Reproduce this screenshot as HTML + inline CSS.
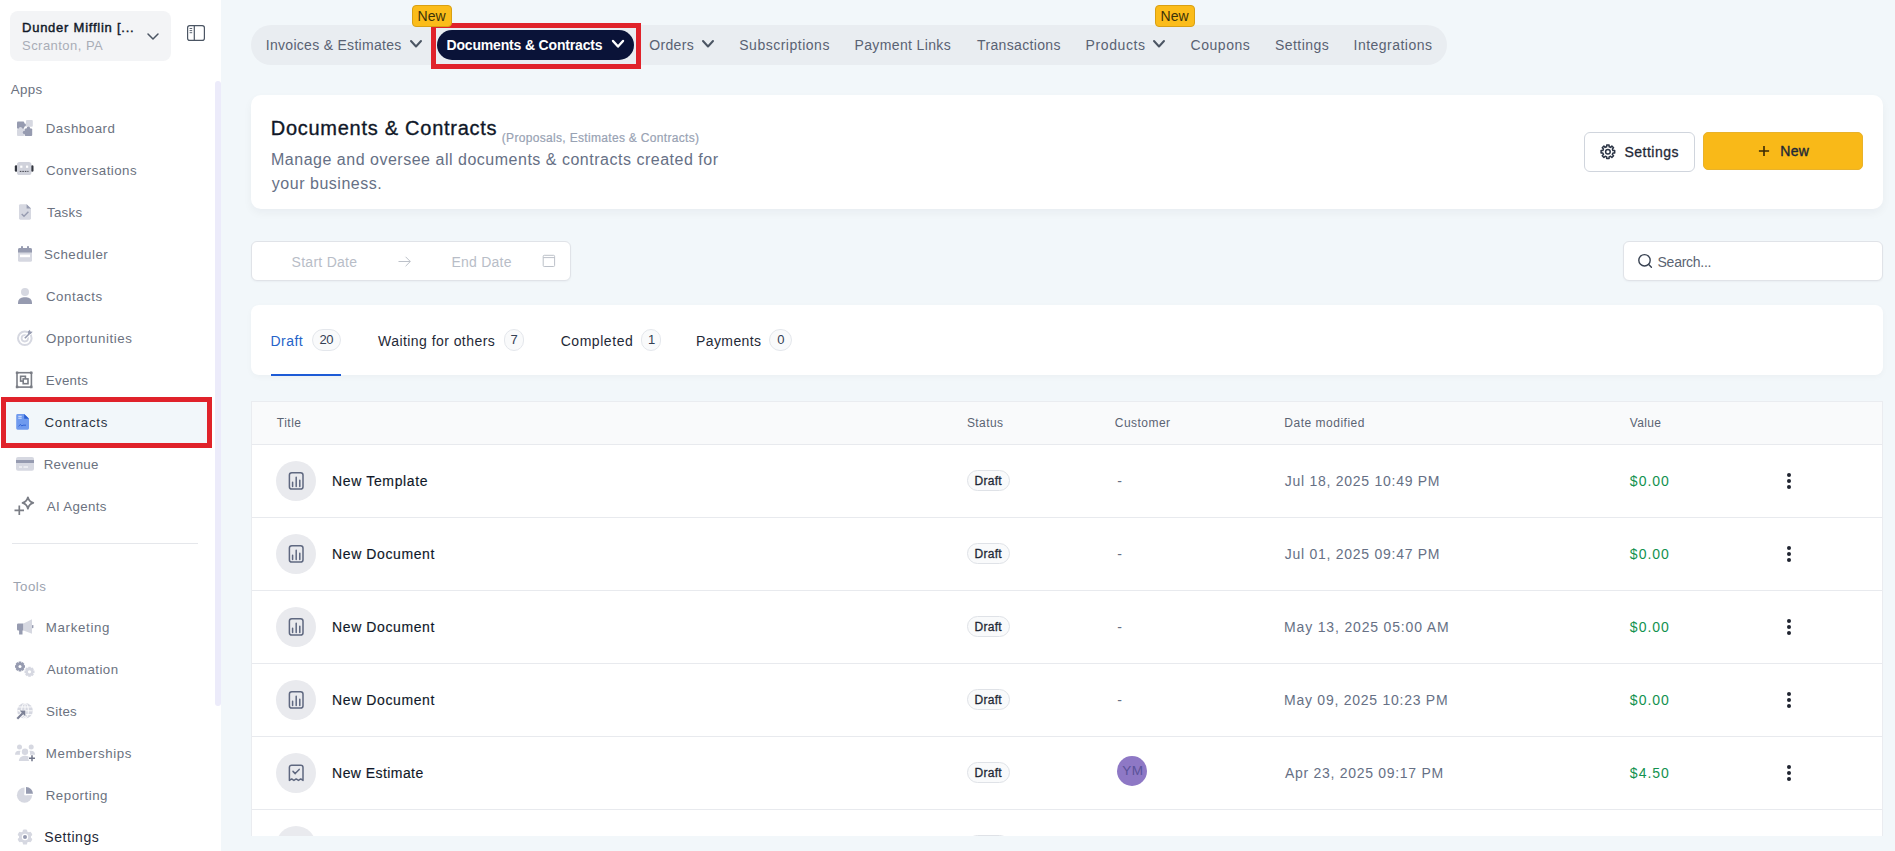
<!DOCTYPE html>
<html lang="en"><head><meta charset="utf-8"><title>Documents &amp; Contracts</title>
<style>

*{box-sizing:border-box;margin:0;padding:0}
html,body{width:1895px;height:851px;overflow:hidden;background:#f2f7fa;font-family:"Liberation Sans",Arial,sans-serif;}
body{position:relative}
.t{position:absolute;white-space:nowrap;display:block}
.a{position:absolute;display:block}
#sidebar{left:0;top:0;width:221px;height:851px;background:#fff}
#acct{left:10px;top:11px;width:161px;height:50px;background:#f3f4f6;border-radius:8px}
#sbar{left:215px;top:81px;width:6px;height:625px;background:#ecebfa;border-radius:3px}
#selbox{left:1px;top:397px;width:211px;height:51px;border:5px solid #e0222a;background:#f2f7fa}
#divider{left:12px;top:543px;width:186px;height:1px;background:#e5e7eb}
#navbar{left:251px;top:25px;width:1196px;height:40px;background:#e9edf1;border-radius:20px}
#navred{left:431px;top:23px;width:210px;height:46px;border:5px solid #e0222a;background:#e9edf1}
#navact{left:437px;top:30px;width:197px;height:30px;background:#0a1338;border-radius:15px}
.newb{width:40px;height:22px;background:#fbbc1a;border:1px solid #d9a013;border-radius:4px}
#hcard{left:251px;top:95px;width:1632px;height:114px;background:#fff;border-radius:10px;box-shadow:0 4px 10px rgba(16,24,40,.045)}
#bset{left:1584px;top:132px;width:111px;height:40px;background:#fff;border:1px solid #d0d5dd;border-radius:6px}
#bnew{left:1703px;top:132px;width:160px;height:38px;background:#f9b918;border:1px solid #e9b22a;border-radius:5px}
#dbox{left:251px;top:241px;width:320px;height:40px;background:#fff;border:1px solid #e0e3e8;border-radius:6px;box-shadow:0 1px 2px rgba(16,24,40,.04)}
#sbox{left:1623px;top:241px;width:260px;height:40px;background:#fff;border:1px solid #e0e3e8;border-radius:6px;box-shadow:0 1px 2px rgba(16,24,40,.04)}
#tcard{left:251px;top:305px;width:1632px;height:70px;background:#fff;border-radius:8px;box-shadow:0 2px 6px rgba(16,24,40,.03)}
#tline{left:271px;top:374px;width:70px;height:2px;background:#1d5bd6}
.cb{height:22px;border:1px solid #e4e7ec;border-radius:11px;background:#f9fafb}
#table{left:251px;top:401px;width:1632px;height:435px;background:#fff;border:1px solid #eaecf0;border-bottom:0;overflow:hidden}
#thead{left:0;top:0;width:1632px;height:43px;background:#f9fafb;border-bottom:1px solid #e8eaee}
.rl{left:0;width:1632px;height:1px;background:#e8eaee}
.ic{width:40px;height:40px;border-radius:20px;background:#e9eaee}
.db{width:43px;height:21px;border:1px solid #dfe2e7;border-radius:11px;background:#f9fafb}
.dot{width:3.5px;height:3.5px;border-radius:2px;background:#1f2430}
#ym{left:1117px;top:756px;width:30px;height:30px;border-radius:15px;background:#8e78c5}
</style></head><body>
<div class="a" id="sidebar"></div>
<div class="a" id="acct"></div>
<div class="a" id="sbar"></div>
<div class="a" id="selbox"></div>
<div class="a" id="divider"></div>
<div class="a" id="navbar"></div>
<div class="a" id="navred"></div>
<div class="a" id="navact"></div>
<div class="a newb" style="left:412px;top:5px"></div>
<div class="a newb" style="left:1155px;top:5px"></div>
<div class="a" id="hcard"></div>
<div class="a" id="bset"></div>
<div class="a" id="bnew"></div>
<div class="a" id="dbox"></div>
<div class="a" id="sbox"></div>
<div class="a" id="tcard"></div>
<div class="a" id="tline"></div>
<div class="a cb" style="left:312px;top:329px;width:29px"></div>
<div class="a cb" style="left:503.5px;top:329px;width:20.5px"></div>
<div class="a cb" style="left:641px;top:329px;width:19.5px"></div>
<div class="a cb" style="left:769px;top:329px;width:23px"></div>
<div class="a" id="table"><div class="a" id="thead"></div>
<div class="a rl" style="top:115px"></div>
<div class="a rl" style="top:188px"></div>
<div class="a rl" style="top:261px"></div>
<div class="a rl" style="top:334px"></div>
<div class="a rl" style="top:407px"></div>
<div class="a ic" style="left:24px;top:59px"></div>
<div class="a db" style="left:715px;top:68.25px"></div>
<div class="a ic" style="left:24px;top:132px"></div>
<div class="a db" style="left:715px;top:141.25px"></div>
<div class="a ic" style="left:24px;top:205px"></div>
<div class="a db" style="left:715px;top:214.25px"></div>
<div class="a ic" style="left:24px;top:278px"></div>
<div class="a db" style="left:715px;top:287.25px"></div>
<div class="a ic" style="left:24px;top:351px"></div>
<div class="a db" style="left:715px;top:360.25px"></div>
<div class="a ic" style="left:24px;top:424px"></div>
<div class="a db" style="left:715px;top:433.25px"></div>
</div>
<div class="a dot" style="left:1787.25px;top:473.35px"></div>
<div class="a dot" style="left:1787.25px;top:479.25px"></div>
<div class="a dot" style="left:1787.25px;top:485.15px"></div>
<div class="a dot" style="left:1787.25px;top:546.35px"></div>
<div class="a dot" style="left:1787.25px;top:552.25px"></div>
<div class="a dot" style="left:1787.25px;top:558.15px"></div>
<div class="a dot" style="left:1787.25px;top:619.35px"></div>
<div class="a dot" style="left:1787.25px;top:625.25px"></div>
<div class="a dot" style="left:1787.25px;top:631.15px"></div>
<div class="a dot" style="left:1787.25px;top:692.35px"></div>
<div class="a dot" style="left:1787.25px;top:698.25px"></div>
<div class="a dot" style="left:1787.25px;top:704.15px"></div>
<div class="a dot" style="left:1787.25px;top:765.35px"></div>
<div class="a dot" style="left:1787.25px;top:771.25px"></div>
<div class="a dot" style="left:1787.25px;top:777.15px"></div>
<div class="a" id="ym"></div>
<svg class="a" style="left:408.5px;top:39.35px" width="14" height="9.5" viewBox="0 0 14 9.5" ><path d="M2 2 L7 7.5 L12 2" fill="none" stroke="#4b5563" stroke-width="2" stroke-linecap="round" stroke-linejoin="round"/></svg>
<svg class="a" style="left:610.5px;top:39.35px" width="14" height="9.5" viewBox="0 0 14 9.5" ><path d="M2 2 L7 7.5 L12 2" fill="none" stroke="#ffffff" stroke-width="2.4" stroke-linecap="round" stroke-linejoin="round"/></svg>
<svg class="a" style="left:701px;top:39.35px" width="14" height="9.5" viewBox="0 0 14 9.5" ><path d="M2 2 L7 7.5 L12 2" fill="none" stroke="#4b5563" stroke-width="2" stroke-linecap="round" stroke-linejoin="round"/></svg>
<svg class="a" style="left:1152px;top:39.35px" width="14" height="9.5" viewBox="0 0 14 9.5" ><path d="M2 2 L7 7.5 L12 2" fill="none" stroke="#4b5563" stroke-width="2" stroke-linecap="round" stroke-linejoin="round"/></svg>
<svg class="a" style="left:145.5px;top:31.5px" width="14" height="9" viewBox="0 0 14 9" ><path d="M2 2 L7 7 L12 2" fill="none" stroke="#4b5563" stroke-width="1.5" stroke-linecap="round" stroke-linejoin="round"/></svg>
<svg class="a" style="left:0;top:0" width="1895" height="851" viewBox="0 0 1895 851">
<g fill="none" stroke="#4b5563" stroke-width="1.2"><rect x="187.6" y="25.6" width="16.8" height="14.8" rx="2.2"/><path d="M194.3 25.6V40.4"/><path d="M189.6 28.5h2.6M189.6 30.6h2.6M189.6 32.7h2.6" stroke-width="0.9"/></g>
<g><rect x="17" y="121.5" width="7.2" height="7.2" rx="1" fill="#969bb0"/><circle cx="24.3" cy="125" r="1.7" fill="#969bb0"/><rect x="26" y="120" width="6.8" height="6.8" rx="1" fill="#d6d8e1"/><rect x="17" y="129" width="7.2" height="7" rx="1" fill="#d6d8e1"/><circle cx="20.5" cy="128.6" r="1.7" fill="#d6d8e1"/><rect x="24.6" y="128.6" width="7.6" height="7.4" rx="1" fill="#969bb0"/><circle cx="28.4" cy="128.2" r="1.7" fill="#969bb0"/><circle cx="24.4" cy="132.4" r="1.6" fill="#969bb0"/></g>
<g><rect x="14.8" y="165.3" width="2.6" height="6.4" rx="1.3" fill="#33363f"/><rect x="30.9" y="165.3" width="2.6" height="6.4" rx="1.3" fill="#33363f"/><rect x="17" y="162" width="14.4" height="13" rx="2.6" fill="#d0d2db"/><rect x="20.2" y="165.6" width="2.2" height="2.2" fill="#fff"/><rect x="26" y="165.6" width="2.2" height="2.2" fill="#fff"/><path d="M19.8 171.4h1.6M22.3 171.4h1.6M24.8 171.4h1.6M27.3 171.4h1.2" stroke="#33363f" stroke-width="0.9"/></g>
<g><path d="M20.4 204.2h6.2l4.4 4.4v9.7a1.4 1.4 0 0 1-1.4 1.4h-9.2a1.4 1.4 0 0 1-1.4-1.4v-12.7a1.4 1.4 0 0 1 1.4-1.4z" fill="#d6d8e1"/><path d="M26.6 204.2l4.4 4.4h-4.4z" fill="#969bb0"/><path d="M21.700 214l2.300 2.300 4.400-4.500" fill="none" stroke="#969bb0" stroke-width="1.400"/></g>
<g><rect x="18" y="248" width="14" height="13.8" rx="1.6" fill="#d6d8e1"/><path d="M18 249.6a1.6 1.6 0 0 1 1.6-1.6h10.8a1.6 1.6 0 0 1 1.6 1.6v3h-14z" fill="#969bb0"/><rect x="21" y="246.2" width="2" height="3" fill="#969bb0"/><rect x="27" y="246.2" width="2" height="3" fill="#969bb0"/><rect x="20" y="254.6" width="10" height="2.6" fill="#fff"/></g>
<g><circle cx="25" cy="292" r="4" fill="#d6d8e1"/><path d="M18 304v-1.2a5.6 5.6 0 0 1 5.6-5.6h2.8a5.6 5.6 0 0 1 5.6 5.6v1.2z" fill="#969bb0"/></g>
<g fill="none" stroke="#d6d8e1"><circle cx="24.8" cy="338.3" r="6.8" stroke-width="2"/><circle cx="24.8" cy="338.3" r="3.2" stroke-width="1.8"/></g><g><path d="M24.8 338.3l5.4-5.4" stroke="#fff" stroke-width="3.2"/><path d="M24.8 338.3l5-5" stroke="#969bb0" stroke-width="1.6"/><path d="M28 331.600l1.800-1.900 .6 1.700 2.300 .4-2 2.100-2.500 .1z" fill="#969bb0"/></g>
<g fill="none" stroke="#7a7d85" stroke-width="1.6"><rect x="17" y="372.7" width="14.4" height="14.4"/><rect x="20.6" y="376.3" width="4.8" height="4.8"/><rect x="23.2" y="378.9" width="4.8" height="4.8" fill="#fff"/></g><g fill="#7a7d85"><rect x="15.8" y="371.5" width="2.6" height="2.6" rx=".5"/><rect x="29.9" y="371.5" width="2.6" height="2.6" rx=".5"/><rect x="15.8" y="385.6" width="2.6" height="2.6" rx=".5"/><rect x="29.9" y="385.6" width="2.6" height="2.6" rx=".5"/></g>
<g><path d="M17.6 414h6.6l4.8 4.8v9.5a1.4 1.4 0 0 1-1.4 1.4h-10a1.4 1.4 0 0 1-1.4-1.4v-12.9a1.4 1.4 0 0 1 1.4-1.4z" fill="#6f9aee"/><path d="M24.2 414l4.8 4.800h-4.800z" fill="#2a5fd2"/><path d="M18.300 416.300h3.400M18.300 418.200h3.400" stroke="#e8f0ff" stroke-width="0.9"/><path d="M18.600 426.400l1.800-2 1.400 1.600 1.200-.8h3" fill="none" stroke="#2a5fd2" stroke-width="0.9"/></g>
<g><rect x="16" y="457" width="18" height="13.800" rx="2" fill="#d6d8e1"/><rect x="16" y="460" width="18" height="3" fill="#969bb0"/><path d="M19 467h3M23.500 467h4.500" stroke="#fff" stroke-width="1"/></g>
<g fill="none" stroke="#7a7d85" stroke-width="1.700"><path d="M14.500 510.400h9.500M19.300 505.600v9.500"/><path d="M27.900 497.300c.8 3.300 2.200 4.800 5.400 5.600c-3.200 .8-4.600 2.400-5.400 5.800c-.8-3.400-2.200-5-5.400-5.800c3.200-.8 4.600-2.300 5.400-5.600z" stroke-linejoin="round"/></g>
<g><path d="M18.200 623.500h5.300v7h-1v4h-3.400v-4h-.9a1.200 1.200 0 0 1-1.200-1.200v-4.600a1.200 1.200 0 0 1 1.200-1.200z" fill="#969bb0"/><path d="M23.500 623.500l8.500-4.200v14.400l-8.500-3.200z" fill="#d6d8e1"/><rect x="32" y="625" width="1.400" height="3.200" rx=".6" fill="#969bb0"/></g>
<g fill="#969bb0"><circle cx="20" cy="666.5" r="4"/><rect x="18.7" y="661.5" width="2.6" height="10" transform="rotate(0 20 666.5)"/><rect x="18.7" y="661.5" width="2.6" height="10" transform="rotate(45 20 666.5)"/><rect x="18.7" y="661.5" width="2.6" height="10" transform="rotate(90 20 666.5)"/><rect x="18.7" y="661.5" width="2.6" height="10" transform="rotate(135 20 666.5)"/></g><circle cx="20" cy="666.5" r="1.5" fill="#fff"/>
<g fill="#d6d8e1"><circle cx="29.5" cy="671.8" r="4"/><rect x="28.2" y="666.8" width="2.6" height="10" transform="rotate(0 29.5 671.8)"/><rect x="28.2" y="666.8" width="2.6" height="10" transform="rotate(45 29.5 671.8)"/><rect x="28.2" y="666.8" width="2.6" height="10" transform="rotate(90 29.5 671.8)"/><rect x="28.2" y="666.8" width="2.6" height="10" transform="rotate(135 29.5 671.8)"/></g><circle cx="29.5" cy="671.8" r="1.6" fill="#fff"/>
<g><circle cx="25" cy="710.800" r="7.800" fill="#d6d8e1"/><g fill="none" stroke="#fff" stroke-width="0.9"><ellipse cx="25" cy="710.800" rx="3.400" ry="7.800"/><path d="M25 703v15.600M17.200 710.800h15.600M18.200 707h13.600M18.200 714.600h13.600"/></g><path d="M16.600 719.400l6-6" stroke="#fff" stroke-width="3.400" fill="none"/><path d="M19.600 710.600h5.800v5.800z" stroke="#fff" stroke-width="1.400" fill="#fff"/><path d="M17.300 718.700l5.400-5.400" stroke="#7c8196" stroke-width="2.200" fill="none"/><path d="M19.600 710.600h5.800v5.800z" fill="#7c8196"/></g>
<g fill="#d6d8e1"><circle cx="19.500" cy="747" r="2.500"/><circle cx="31.200" cy="747" r="2.500"/><circle cx="25" cy="751.800" r="3.200"/><path d="M15 754.800a4 4 0 0 1 4-4h1.600a5 5 0 0 0-.6 4zM35 754.800a4 4 0 0 0-4-4h-1.600a5 5 0 0 1 .6 4z"/><path d="M18.800 761a5.400 5.400 0 0 1 5.400-5.200h1.600a5.400 5.400 0 0 1 5.400 5.200z"/></g><circle cx="32" cy="758.300" r="3.600" fill="#fff"/><path d="M29 758.300h6M32 755.300v6" stroke="#6f7488" stroke-width="1.500"/>
<g><circle cx="24.500" cy="795.200" r="7.600" fill="#d6d8e1"/><path d="M24.500 795.200V786h2.500v9.200z" fill="#fff"/><path d="M24.500 795.200h9.500v-2.500h-9.500z" fill="#fff"/><path d="M26 793.800v-6.800a6.900 6.900 0 0 1 7 6.800z" fill="#969bb0"/></g>
<g fill="#d6d8e1"><circle cx="25" cy="837" r="6.08"/><rect x="22.872" y="829.4" width="4.256" height="15.2" rx="1.200" transform="rotate(0 25 837)"/><rect x="22.872" y="829.4" width="4.256" height="15.2" rx="1.200" transform="rotate(60 25 837)"/><rect x="22.872" y="829.4" width="4.256" height="15.2" rx="1.200" transform="rotate(120 25 837)"/></g>
<circle cx="25" cy="837" r="3.200" fill="#fff"/><circle cx="25" cy="837" r="2" fill="#969bb0"/>
<g fill="none" stroke="#2b3445" stroke-width="1.500" stroke-linejoin="round"><path d="M1606.71 145.00L1609.09 145.00L1609.11 146.74L1610.62 147.37L1611.87 146.15L1613.55 147.83L1612.33 149.08L1612.96 150.59L1614.70 150.61L1614.70 152.99L1612.96 153.01L1612.33 154.52L1613.55 155.77L1611.87 157.45L1610.62 156.23L1609.11 156.86L1609.09 158.60L1606.71 158.60L1606.69 156.86L1605.18 156.23L1603.93 157.45L1602.25 155.77L1603.47 154.52L1602.84 153.01L1601.10 152.99L1601.10 150.61L1602.84 150.59L1603.47 149.08L1602.25 147.83L1603.93 146.15L1605.18 147.37L1606.69 146.74Z"/><circle cx="1607.900" cy="151.800" r="2.300"/></g>
<path d="M1758.900 151h10.200M1764 145.900v10.200" stroke="#3a2a05" stroke-width="1.600" fill="none"/>
<g fill="none" stroke="#bcc1c9" stroke-width="1"><path d="M398.500 261.500h11.700M405.600 256.800l4.700 4.700-4.700 4.700"/><rect x="543.200" y="255.300" width="11.400" height="11.200" rx="1"/><path d="M543.200 257.600h11.400"/></g>
<g fill="none" stroke="#374151" stroke-width="1.400" stroke-linecap="round"><circle cx="1644.500" cy="260.300" r="5.700"/><path d="M1648.700 264.500l2.700 2.700"/></g>
<g fill="none" stroke="#5f6880" stroke-width="1.500" stroke-linecap="round"><rect x="289.400" y="472.7" width="13.600" height="16.400" rx="2.400"/><path d="M292.600 482.3v4.300M296.200 477.3v9.300M299.800 480.3v6.300"/></g>
<g fill="none" stroke="#5f6880" stroke-width="1.500" stroke-linecap="round"><rect x="289.400" y="545.7" width="13.600" height="16.400" rx="2.400"/><path d="M292.600 555.3v4.300M296.200 550.3v9.300M299.800 553.3v6.300"/></g>
<g fill="none" stroke="#5f6880" stroke-width="1.500" stroke-linecap="round"><rect x="289.400" y="618.7" width="13.600" height="16.400" rx="2.400"/><path d="M292.600 628.3v4.300M296.200 623.3v9.300M299.800 626.3v6.300"/></g>
<g fill="none" stroke="#5f6880" stroke-width="1.500" stroke-linecap="round"><rect x="289.400" y="691.7" width="13.600" height="16.400" rx="2.400"/><path d="M292.600 701.3v4.300M296.200 696.3v9.300M299.800 699.3v6.300"/></g>
<g fill="none" stroke="#5f6880" stroke-width="1.500" stroke-linecap="round" stroke-linejoin="round"><path d="M289.400 780.4v-13a2.200 2.200 0 0 1 2.200-2.200h9.200a2.200 2.200 0 0 1 2.200 2.200v13l-2.270-1.500-2.270 1.500-2.270-1.500-2.270 1.500-2.270-1.500z"/><path d="M293 771.4l2.200 2.200 4-4.200"/></g>
</svg>
<span class="t" id="t0" style="left:22.00px;top:18.00px;font-size:13px;line-height:19px;font-weight:400;color:#101828;letter-spacing:0.756px;-webkit-text-stroke:0.42px #101828;">Dunder Mifflin [...</span>
<span class="t" id="t1" style="left:22.00px;top:36.00px;font-size:13px;line-height:19px;font-weight:400;color:#a9adb6;letter-spacing:0.464px;">Scranton, PA</span>
<span class="t" id="t2" style="left:10.75px;top:79.65px;font-size:13.3px;line-height:19.3px;font-weight:400;color:#6b7280;letter-spacing:0.367px;">Apps</span>
<span class="t" id="t3" style="left:45.75px;top:118.55px;font-size:13.3px;line-height:19.3px;font-weight:400;color:#6b7280;letter-spacing:0.512px;">Dashboard</span>
<span class="t" id="t4" style="left:46.00px;top:160.55px;font-size:13.3px;line-height:19.3px;font-weight:400;color:#6b7280;letter-spacing:0.467px;">Conversations</span>
<span class="t" id="t5" style="left:47.00px;top:202.55px;font-size:13.3px;line-height:19.3px;font-weight:400;color:#6b7280;letter-spacing:0.275px;">Tasks</span>
<span class="t" id="t6" style="left:44.00px;top:244.55px;font-size:13.3px;line-height:19.3px;font-weight:400;color:#6b7280;letter-spacing:0.481px;">Scheduler</span>
<span class="t" id="t7" style="left:46.00px;top:286.55px;font-size:13.3px;line-height:19.3px;font-weight:400;color:#6b7280;letter-spacing:0.514px;">Contacts</span>
<span class="t" id="t8" style="left:46.00px;top:328.55px;font-size:13.3px;line-height:19.3px;font-weight:400;color:#6b7280;letter-spacing:0.558px;">Opportunities</span>
<span class="t" id="t9" style="left:45.75px;top:370.55px;font-size:13.3px;line-height:19.3px;font-weight:400;color:#6b7280;letter-spacing:0.320px;">Events</span>
<span class="t" id="t10" style="left:43.75px;top:454.55px;font-size:13.3px;line-height:19.3px;font-weight:400;color:#6b7280;letter-spacing:0.225px;">Revenue</span>
<span class="t" id="t11" style="left:46.75px;top:496.55px;font-size:13.3px;line-height:19.3px;font-weight:400;color:#6b7280;letter-spacing:0.344px;">AI Agents</span>
<span class="t" id="t12" style="left:45.75px;top:617.55px;font-size:13.3px;line-height:19.3px;font-weight:400;color:#6b7280;letter-spacing:0.669px;">Marketing</span>
<span class="t" id="t13" style="left:46.75px;top:659.55px;font-size:13.3px;line-height:19.3px;font-weight:400;color:#6b7280;letter-spacing:0.450px;">Automation</span>
<span class="t" id="t14" style="left:46.00px;top:701.55px;font-size:13.3px;line-height:19.3px;font-weight:400;color:#6b7280;letter-spacing:0.300px;">Sites</span>
<span class="t" id="t15" style="left:45.75px;top:743.55px;font-size:13.3px;line-height:19.3px;font-weight:400;color:#6b7280;letter-spacing:0.590px;">Memberships</span>
<span class="t" id="t16" style="left:45.75px;top:785.55px;font-size:13.3px;line-height:19.3px;font-weight:400;color:#6b7280;letter-spacing:0.512px;">Reporting</span>
<span class="t" id="t17" style="left:44.50px;top:412.55px;font-size:13.3px;line-height:19.3px;font-weight:400;color:#2b3443;letter-spacing:0.750px;">Contracts</span>
<span class="t" id="t18" style="left:13.00px;top:577.05px;font-size:13.3px;line-height:19.3px;font-weight:400;color:#9ca3af;letter-spacing:0.450px;">Tools</span>
<span class="t" id="t19" style="left:44.35px;top:827.20px;font-size:14px;line-height:20px;font-weight:400;color:#1f2937;letter-spacing:0.543px;">Settings</span>
<span class="t" id="t20" style="left:265.75px;top:35.00px;font-size:14px;line-height:20px;font-weight:400;color:#596273;letter-spacing:0.295px;">Invoices &amp; Estimates</span>
<span class="t" id="t21" style="left:446.50px;top:35.00px;font-size:14px;line-height:20px;font-weight:700;color:#ffffff;letter-spacing:-0.170px;">Documents &amp; Contracts</span>
<span class="t" id="t22" style="left:649.25px;top:35.00px;font-size:14px;line-height:20px;font-weight:400;color:#596273;letter-spacing:0.320px;">Orders</span>
<span class="t" id="t23" style="left:739.25px;top:35.00px;font-size:14px;line-height:20px;font-weight:400;color:#596273;letter-spacing:0.508px;">Subscriptions</span>
<span class="t" id="t24" style="left:854.50px;top:35.00px;font-size:14px;line-height:20px;font-weight:400;color:#596273;letter-spacing:0.363px;">Payment Links</span>
<span class="t" id="t25" style="left:977.00px;top:35.00px;font-size:14px;line-height:20px;font-weight:400;color:#596273;letter-spacing:0.350px;">Transactions</span>
<span class="t" id="t26" style="left:1085.50px;top:35.00px;font-size:14px;line-height:20px;font-weight:400;color:#596273;letter-spacing:0.621px;">Products</span>
<span class="t" id="t27" style="left:1190.50px;top:35.00px;font-size:14px;line-height:20px;font-weight:400;color:#596273;letter-spacing:0.550px;">Coupons</span>
<span class="t" id="t28" style="left:1275.00px;top:35.00px;font-size:14px;line-height:20px;font-weight:400;color:#596273;letter-spacing:0.443px;">Settings</span>
<span class="t" id="t29" style="left:1353.50px;top:35.00px;font-size:14px;line-height:20px;font-weight:400;color:#596273;letter-spacing:0.486px;">Integrations</span>
<span class="t" id="t30" style="left:417.39px;top:6.00px;font-size:14px;line-height:20px;font-weight:400;color:#3b3209;letter-spacing:0.175px;">New</span>
<span class="t" id="t31" style="left:1160.39px;top:6.00px;font-size:14px;line-height:20px;font-weight:400;color:#3b3209;letter-spacing:0.175px;">New</span>
<span class="t" id="t32" style="left:270.75px;top:115.00px;font-size:20px;line-height:26px;font-weight:400;color:#101828;letter-spacing:0.730px;-webkit-text-stroke:0.35px #101828;">Documents &amp; Contracts</span>
<span class="t" id="t33" style="left:501.75px;top:129.00px;font-size:12px;line-height:18px;font-weight:400;color:#98a2b3;letter-spacing:0.321px;-webkit-text-stroke:0.2px #98a2b3;">(Proposals, Estimates &amp; Contracts)</span>
<span class="t" id="t34" style="left:271.00px;top:148.50px;font-size:16px;line-height:22px;font-weight:400;color:#667085;letter-spacing:0.511px;">Manage and oversee all documents &amp; contracts created for</span>
<span class="t" id="t35" style="left:271.85px;top:172.50px;font-size:16px;line-height:22px;font-weight:400;color:#667085;letter-spacing:0.519px;">your business.</span>
<span class="t" id="t36" style="left:1624.54px;top:142.00px;font-size:14px;line-height:20px;font-weight:400;color:#1f2937;letter-spacing:0.471px;-webkit-text-stroke:0.3px #1f2937;">Settings</span>
<span class="t" id="t37" style="left:1780.25px;top:141.00px;font-size:14px;line-height:20px;font-weight:400;color:#1f2937;letter-spacing:0.350px;-webkit-text-stroke:0.4px #1f2937;">New</span>
<span class="t" id="t38" style="left:291.54px;top:252.00px;font-size:14px;line-height:20px;font-weight:400;color:#b8bdc7;letter-spacing:0.278px;">Start Date</span>
<span class="t" id="t39" style="left:451.50px;top:252.00px;font-size:14px;line-height:20px;font-weight:400;color:#b8bdc7;letter-spacing:0.236px;">End Date</span>
<span class="t" id="t40" style="left:1657.54px;top:251.50px;font-size:14px;line-height:20px;font-weight:400;color:#5b6472;letter-spacing:-0.256px;">Search...</span>
<span class="t" id="t41" style="left:270.50px;top:331.00px;font-size:14px;line-height:20px;font-weight:400;color:#2563c9;letter-spacing:0.463px;">Draft</span>
<span class="t" id="t42" style="left:378.04px;top:331.00px;font-size:14px;line-height:20px;font-weight:400;color:#1f2937;letter-spacing:0.444px;">Waiting for others</span>
<span class="t" id="t43" style="left:560.64px;top:331.00px;font-size:14px;line-height:20px;font-weight:400;color:#1f2937;letter-spacing:0.556px;">Completed</span>
<span class="t" id="t44" style="left:696.00px;top:331.00px;font-size:14px;line-height:20px;font-weight:400;color:#1f2937;letter-spacing:0.407px;">Payments</span>
<span class="t" id="t45" style="left:319.50px;top:330.00px;font-size:13px;line-height:19px;font-weight:400;color:#344054;letter-spacing:-0.400px;">20</span>
<span class="t" id="t46" style="left:510.50px;top:330.00px;font-size:13px;line-height:19px;font-weight:400;color:#344054;letter-spacing:-0.400px;">7</span>
<span class="t" id="t47" style="left:648.10px;top:330.00px;font-size:13px;line-height:19px;font-weight:400;color:#344054;letter-spacing:-1.700px;">1</span>
<span class="t" id="t48" style="left:777.25px;top:330.00px;font-size:13px;line-height:19px;font-weight:400;color:#344054;letter-spacing:0.100px;">0</span>
<span class="t" id="t49" style="left:276.85px;top:414.00px;font-size:12px;line-height:18px;font-weight:400;color:#5b6473;letter-spacing:0.487px;">Title</span>
<span class="t" id="t50" style="left:966.89px;top:414.00px;font-size:12px;line-height:18px;font-weight:400;color:#5b6473;letter-spacing:0.430px;">Status</span>
<span class="t" id="t51" style="left:1114.85px;top:414.00px;font-size:12px;line-height:18px;font-weight:400;color:#5b6473;letter-spacing:0.457px;">Customer</span>
<span class="t" id="t52" style="left:1284.29px;top:414.00px;font-size:12px;line-height:18px;font-weight:400;color:#5b6473;letter-spacing:0.512px;">Date modified</span>
<span class="t" id="t53" style="left:1629.85px;top:414.00px;font-size:12px;line-height:18px;font-weight:400;color:#5b6473;letter-spacing:0.337px;">Value</span>
<span class="t" id="t54" style="left:332.10px;top:470.70px;font-size:14px;line-height:20px;font-weight:400;color:#101828;letter-spacing:0.641px;-webkit-text-stroke:0.15px #101828;">New Template</span>
<span class="t" id="t55" style="left:974.50px;top:472.00px;font-size:12px;line-height:18px;font-weight:400;color:#1f2937;letter-spacing:0.275px;-webkit-text-stroke:0.3px #1f2937;">Draft</span>
<span class="t" id="t56" style="left:1117.25px;top:471.00px;font-size:14px;line-height:20px;font-weight:400;color:#667085;">-</span>
<span class="t" id="t57" style="left:1284.79px;top:470.60px;font-size:14px;line-height:20px;font-weight:400;color:#667085;letter-spacing:0.732px;">Jul 18, 2025 10:49 PM</span>
<span class="t" id="t58" style="left:1629.85px;top:470.60px;font-size:14px;line-height:20px;font-weight:400;color:#12924f;letter-spacing:1.000px;">$0.00</span>
<span class="t" id="t59" style="left:332.10px;top:543.70px;font-size:14px;line-height:20px;font-weight:400;color:#101828;letter-spacing:0.591px;-webkit-text-stroke:0.15px #101828;">New Document</span>
<span class="t" id="t60" style="left:974.50px;top:545.00px;font-size:12px;line-height:18px;font-weight:400;color:#1f2937;letter-spacing:0.275px;-webkit-text-stroke:0.3px #1f2937;">Draft</span>
<span class="t" id="t61" style="left:1117.25px;top:544.00px;font-size:14px;line-height:20px;font-weight:400;color:#667085;">-</span>
<span class="t" id="t62" style="left:1284.79px;top:543.60px;font-size:14px;line-height:20px;font-weight:400;color:#667085;letter-spacing:0.732px;">Jul 01, 2025 09:47 PM</span>
<span class="t" id="t63" style="left:1629.85px;top:543.60px;font-size:14px;line-height:20px;font-weight:400;color:#12924f;letter-spacing:1.000px;">$0.00</span>
<span class="t" id="t64" style="left:332.10px;top:616.70px;font-size:14px;line-height:20px;font-weight:400;color:#101828;letter-spacing:0.591px;-webkit-text-stroke:0.15px #101828;">New Document</span>
<span class="t" id="t65" style="left:974.50px;top:618.00px;font-size:12px;line-height:18px;font-weight:400;color:#1f2937;letter-spacing:0.275px;-webkit-text-stroke:0.3px #1f2937;">Draft</span>
<span class="t" id="t66" style="left:1117.25px;top:617.00px;font-size:14px;line-height:20px;font-weight:400;color:#667085;">-</span>
<span class="t" id="t67" style="left:1284.04px;top:616.60px;font-size:14px;line-height:20px;font-weight:400;color:#667085;letter-spacing:0.835px;">May 13, 2025 05:00 AM</span>
<span class="t" id="t68" style="left:1629.85px;top:616.60px;font-size:14px;line-height:20px;font-weight:400;color:#12924f;letter-spacing:1.000px;">$0.00</span>
<span class="t" id="t69" style="left:332.10px;top:689.70px;font-size:14px;line-height:20px;font-weight:400;color:#101828;letter-spacing:0.591px;-webkit-text-stroke:0.15px #101828;">New Document</span>
<span class="t" id="t70" style="left:974.50px;top:691.00px;font-size:12px;line-height:18px;font-weight:400;color:#1f2937;letter-spacing:0.275px;-webkit-text-stroke:0.3px #1f2937;">Draft</span>
<span class="t" id="t71" style="left:1117.25px;top:690.00px;font-size:14px;line-height:20px;font-weight:400;color:#667085;">-</span>
<span class="t" id="t72" style="left:1284.04px;top:689.60px;font-size:14px;line-height:20px;font-weight:400;color:#667085;letter-spacing:0.747px;">May 09, 2025 10:23 PM</span>
<span class="t" id="t73" style="left:1629.85px;top:689.60px;font-size:14px;line-height:20px;font-weight:400;color:#12924f;letter-spacing:1.000px;">$0.00</span>
<span class="t" id="t74" style="left:332.10px;top:762.70px;font-size:14px;line-height:20px;font-weight:400;color:#101828;letter-spacing:0.432px;-webkit-text-stroke:0.15px #101828;">New Estimate</span>
<span class="t" id="t75" style="left:974.50px;top:764.00px;font-size:12px;line-height:18px;font-weight:400;color:#1f2937;letter-spacing:0.275px;-webkit-text-stroke:0.3px #1f2937;">Draft</span>
<span class="t" id="t76" style="left:1285.04px;top:762.60px;font-size:14px;line-height:20px;font-weight:400;color:#667085;letter-spacing:0.705px;">Apr 23, 2025 09:17 PM</span>
<span class="t" id="t77" style="left:1629.85px;top:762.60px;font-size:14px;line-height:20px;font-weight:400;color:#12924f;letter-spacing:1.000px;">$4.50</span>
<span class="t" id="t78" style="left:1122.14px;top:761.25px;font-size:13.5px;line-height:19.5px;font-weight:400;color:#5a5299;letter-spacing:0.600px;">YM</span>
</body></html>
